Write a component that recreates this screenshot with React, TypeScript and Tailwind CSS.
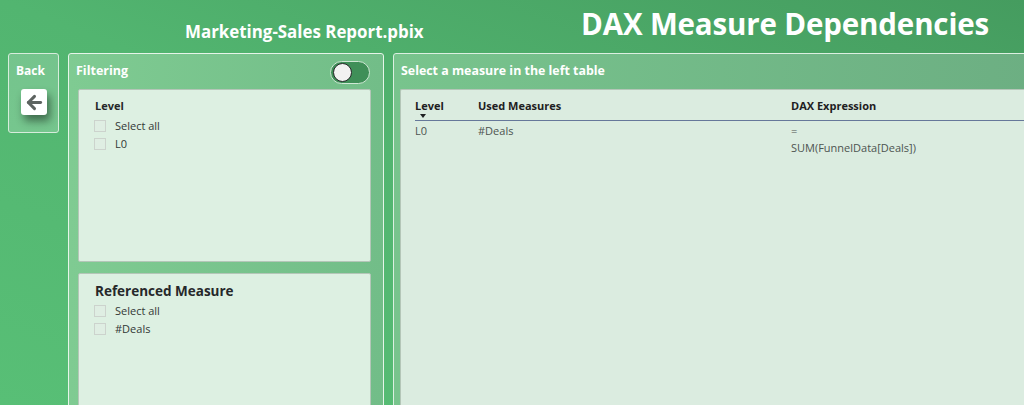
import { ArrowLeft } from 'lucide-react';

function CheckRow({ label }: { label: string }) {
  return (
    <div className="flex items-center h-[18px]">
      <span className="w-3 h-3 border border-[#ccd3cd] bg-[#dfeee3] mr-[9px]" />
      <span className="text-[11px] text-[#333835]">{label}</span>
    </div>
  );
}

function Slicer({ title, big, items, grow }: { title: string; big?: boolean; items: string[]; grow?: boolean }) {
  return (
    <div className={`${grow ? 'flex-1' : 'h-[173px] shrink-0'} bg-[#ddf0e2] border border-[#b4c6b8] rounded-[2px] pl-[15px] ${big ? 'pt-[7px]' : 'pt-[8px]'}`}>
      <div className={`font-bold text-[#26282a] ${big ? 'text-[13.5px] leading-[20px] mb-[1px] ml-[1px]' : 'text-[11px] leading-[16px] mb-[3px] ml-[1px]'}`}>{title}</div>
      {items.map((it) => (
        <CheckRow key={it} label={it} />
      ))}
    </div>
  );
}

export default function App() {
  return (
    <div
      className="w-[1024px] h-[405px] overflow-hidden flex flex-col bg-gradient-to-tr from-[#58bf76] via-[#52b570] to-[#459c5f]"
      style={{ fontFamily: '"Open Sans", "Noto Sans", sans-serif' }}
    >
      <header className="h-[53px] shrink-0 flex items-start text-white font-bold">
        <div className="ml-[185px] mt-[20px] w-[396px] text-[16.9px] leading-[23px]">Marketing-Sales Report.pbix</div>
        <div className="mt-[4px] text-[29.5px] leading-[40px] tracking-[-0.15px] whitespace-nowrap">DAX Measure Dependencies</div>
      </header>

      <main className="flex-1 min-h-0 flex items-start pl-2 gap-[9px]">
        <section className="w-[51px] h-[80px] shrink-0 border border-[#d7ecdc] rounded-[3px] bg-white/20 px-[7px] pt-[7px]">
          <div className="text-white font-bold text-[12px] leading-[20px]">Back</div>
          <button className="mt-[8px] ml-[5px] w-[26px] h-[26px] bg-white rounded-[3px] flex items-center justify-center shadow-[3px_6px_9px_rgba(0,0,0,0.45)]">
            <ArrowLeft className="w-[21px] h-[21px] text-[#5d6360]" strokeWidth={3.4} />
          </button>
        </section>

        <section className="w-[316px] h-[400px] shrink-0 flex flex-col border border-[#e6f4e9] rounded-t-[3px] bg-gradient-to-r from-[#7fcb92] to-[#72bd88] pl-[9px] pr-[12px]">
          <div className="h-[35px] shrink-0 flex items-start justify-between">
            <div className="text-white font-bold text-[12.5px] leading-[20px] mt-[7px] -ml-[2px]">Filtering</div>
            <div className="mt-[7px] mr-[1px] w-[40px] h-[23px] rounded-full bg-[#3f8f58] border border-[#cfe8d5] flex items-center pl-[2px]">
              <span className="w-[19px] h-[19px] rounded-full bg-[#f2f2f2] border-[1.5px] border-[#26282a]" />
            </div>
          </div>
          <Slicer title="Level" items={['Select all', 'L0']} />
          <div className="h-[11px] shrink-0" />
          <Slicer title="Referenced Measure" big items={['Select all', '#Deals']} grow />
        </section>

        <section className="w-[660px] h-[400px] shrink-0 flex flex-col border border-[#dcefe1] rounded-t-[3px] bg-gradient-to-r from-[#78c48d] to-[#6cae82] pl-[6px]">
          <div className="h-[35px] shrink-0 text-white font-bold text-[12.4px] leading-[20px] pt-[7px] pl-[1px]">Select a measure in the left table</div>
          <div className="flex-1 bg-[#dbece0] border-t border-l border-[#b4c6b8] rounded-tl-[2px] pl-[14px] pt-[8px]">
            <div className="h-[23px] flex border-b border-[#66789a] font-bold text-[11px] leading-[16px] text-[#1e2022]">
              <div className="w-[63px] relative">
                Level
                <span className="absolute left-[5px] top-[16px] border-x-[3px] border-x-transparent border-t-[4px] border-t-[#1e2022]" />
              </div>
              <div className="w-[313px]">Used Measures</div>
              <div>DAX Expression</div>
            </div>
            <div className="flex text-[11px] leading-[17px] text-[#4d5450] pt-[1px]">
              <div className="w-[63px]">L0</div>
              <div className="w-[313px]">#Deals</div>
              <div>
                <div>=</div>
                <div>SUM(FunnelData[Deals])</div>
              </div>
            </div>
          </div>
        </section>
      </main>
    </div>
  );
}
